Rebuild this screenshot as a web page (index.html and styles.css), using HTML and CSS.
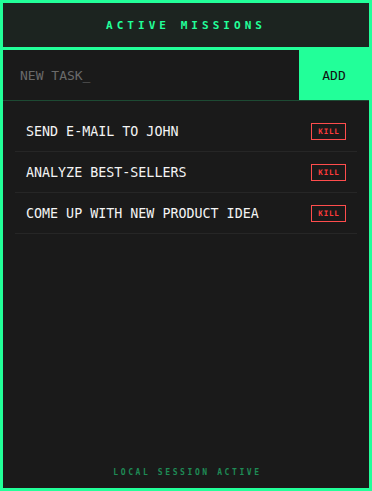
FILE: index.html
```html
<!DOCTYPE html>
<html>
<head>
<meta charset="utf-8">
<link rel="stylesheet" href="styles.css">
</head>
<body>
<div class="app">
  <header class="header">
    <h1 class="title">ACTIVE MISSIONS</h1>
  </header>
  <form class="entry">
    <input class="task-input" type="text" placeholder="NEW TASK_">
    <button class="add-btn" type="button">ADD</button>
  </form>
  <ul class="list">
    <li class="item"><span class="item-text">SEND E-MAIL TO JOHN</span><button class="kill" type="button">KILL</button></li>
    <li class="item"><span class="item-text">ANALYZE BEST-SELLERS</span><button class="kill" type="button">KILL</button></li>
    <li class="item"><span class="item-text">COME UP WITH NEW PRODUCT IDEA</span><button class="kill" type="button">KILL</button></li>
  </ul>
  <footer class="footer">LOCAL SESSION ACTIVE</footer>
</div>
</body>
</html>
```
FILE: styles.css
```css
* { box-sizing: border-box; }
html, body { margin: 0; padding: 0; background: #1a1a1a; }
body { font-family: "DejaVu Sans Mono", monospace; }
.app {
  width: 372px;
  height: 491px;
  border: 3px solid #22ff99;
  background: #1a1a1a;
  display: flex;
  flex-direction: column;
}
.header {
  height: 47px;
  background: #1c2420;
  border-bottom: 3px solid #22ff99;
  display: flex;
  align-items: center;
  justify-content: center;
}
.title {
  margin: 0;
  font-size: 11px;
  font-weight: bold;
  letter-spacing: 4.05px;
  color: #22ff99;
}
.entry {
  margin: 0;
  display: flex;
  height: 51px;
  border-bottom: 1px solid #1d4a33;
}
.task-input {
  flex: 1;
  min-width: 0;
  background: #1a1a1a;
  border: none;
  outline: none;
  padding: 0 17px;
  font-family: "DejaVu Sans Mono", monospace;
  font-size: 13px;
  color: #e8e8e8;
}
.task-input::placeholder { color: #6a6a6a; }
.add-btn {
  width: 70px;
  background: #22ff99;
  border: none;
  font-family: "DejaVu Sans Mono", monospace;
  font-size: 13px;
  color: #111;
  padding: 0;
}
.list {
  list-style: none;
  margin: 0;
  padding: 10px 12px 0 12px;
  flex: 1;
}
.item {
  display: flex;
  align-items: center;
  justify-content: space-between;
  height: 41px;
  padding: 0 11px 0 11px;
  border-bottom: 1px solid #262626;
}
.item-text {
  font-size: 13.33px;
  color: #f4f4f4;
}
.kill {
  background: transparent;
  border: 1px solid #ff4d4d;
  color: #ff3b3b;
  font-family: "DejaVu Sans Mono", monospace;
  font-size: 7.5px;
  font-weight: bold;
  letter-spacing: 0.8px;
  width: 35px;
  height: 17px;
  padding: 0 0 0 1px;
}
.footer {
  text-align: center;
  font-size: 8px;
  font-weight: bold;
  letter-spacing: 2.6px;
  color: #1e8a55;
  padding-bottom: 11px;
  padding-left: 3px;
}
```
